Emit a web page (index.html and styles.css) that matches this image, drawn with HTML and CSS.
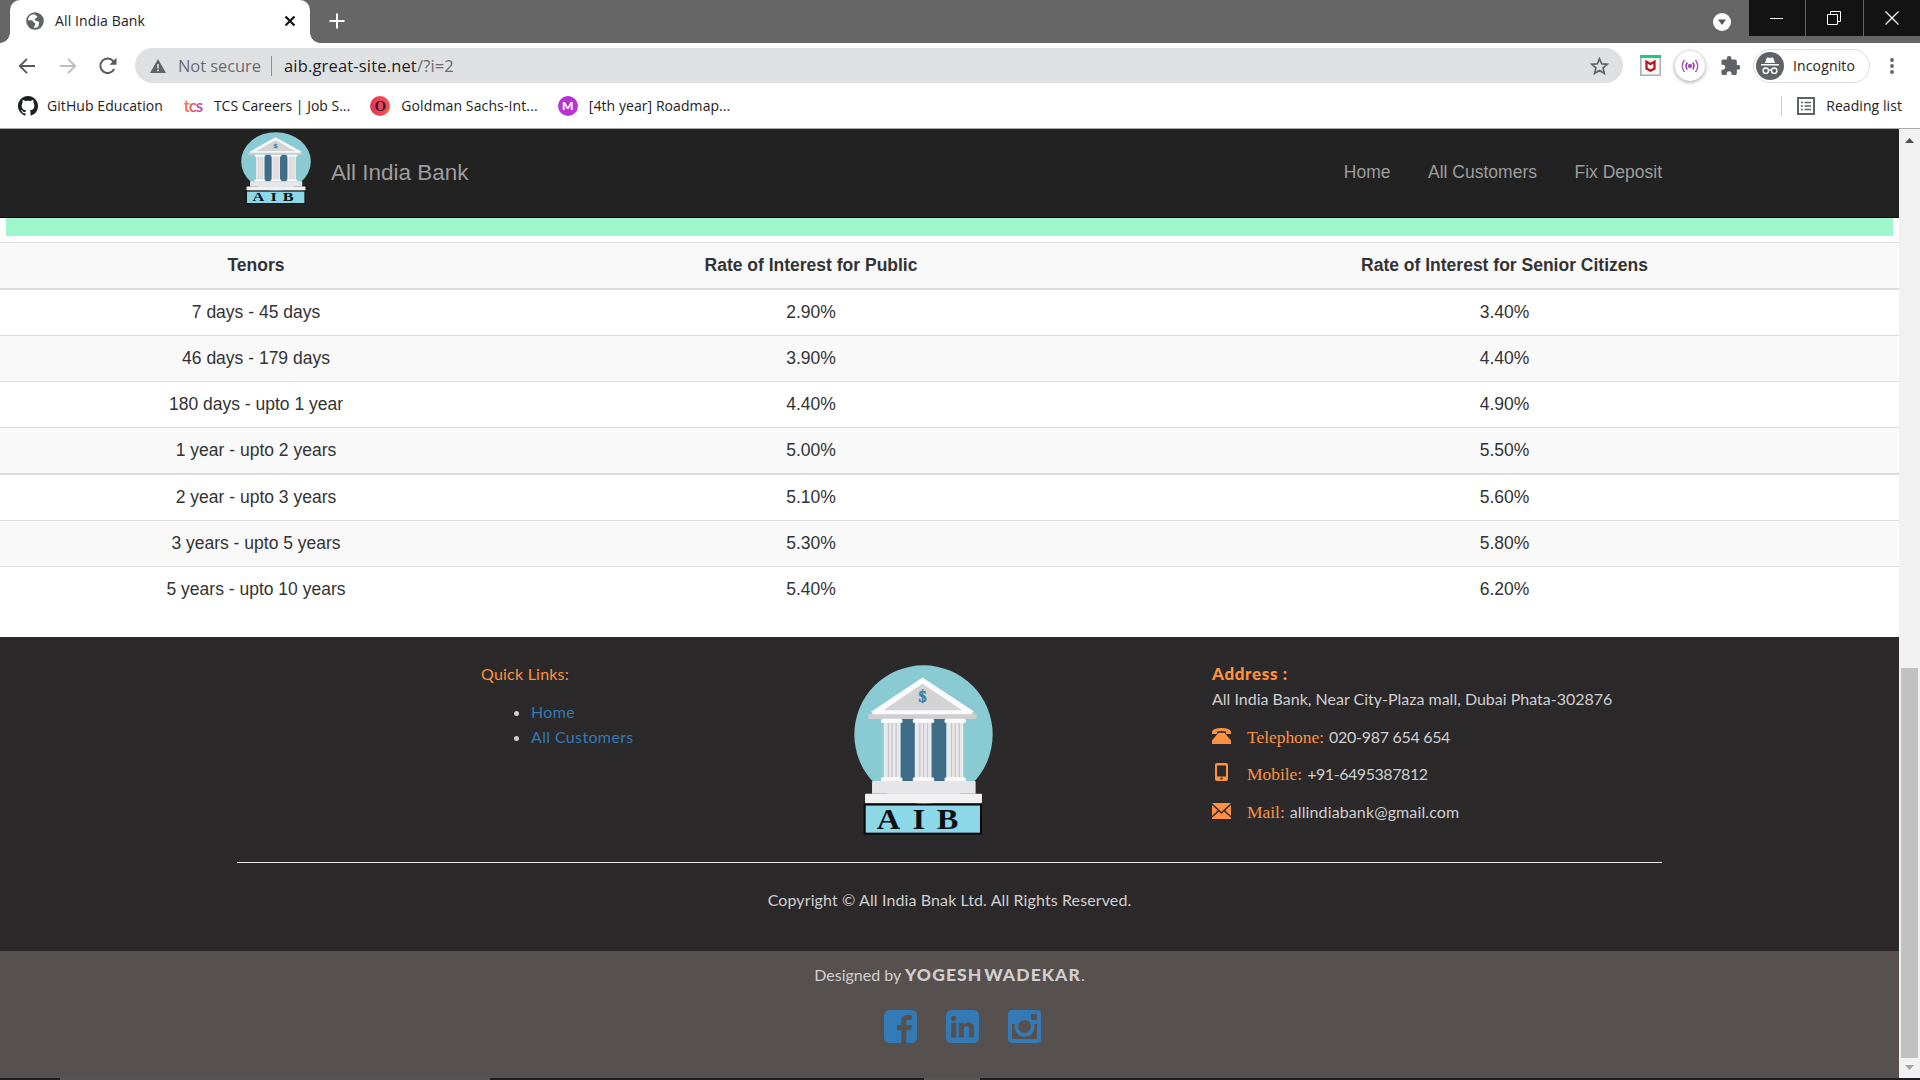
FILE: index.html
```html
<!DOCTYPE html>
<html lang="en">
<head>
<meta charset="utf-8">
<title>All India Bank</title>
<link rel="stylesheet" href="styles.css">
</head>
<body>
<svg class="defs" width="0" height="0" aria-hidden="true">
  <symbol id="bank-logo" viewBox="44 46 416 508" preserveAspectRatio="none">
    <circle cx="252" cy="254" r="207" fill="#8acad2"/>
    <rect x="183" y="205" width="96" height="192" fill="#3f6c87"/>
    <rect x="250" y="205" width="70" height="192" fill="#3f6c87"/>
    <rect x="86" y="192" width="326" height="15" rx="6" fill="#cfcfd1"/>
    <path d="M249 83 402 184q-2 8-8 9H104q-8-2-8-8z" fill="#fbfbfb"/>
    <path d="M249 102 368 181H132z" fill="#d3d3d5"/>
    <text x="249" y="158" text-anchor="middle" font-family="Liberation Serif, serif" font-weight="bold" font-size="48" fill="#2f83ac" stroke="#2f83ac" stroke-width="1.5">$</text>
    <g id="columns">
      <path d="M133 212h50v175h-50zM226 212h50v175h-50zM321 212h50v175h-50z" fill="#e9e9eb"/>
      <path d="M147 218v164M158 218v164M170 218v164M241 218v164M252 218v164M264 218v164M336 218v164M347 218v164M359 218v164" stroke="#c6c6ca" stroke-width="4"/>
      <path d="M131 213h52M226 213h52M321 213h52M131 388h52M226 388h52M321 388h52" stroke="#fafafa" stroke-width="13" stroke-linecap="round"/>
    </g>
    <path d="M98 396q0-3 4-3h302q4 0 4 3v35H98z" fill="#e6e6e8"/>
    <rect x="77" y="431" width="350" height="28" rx="3" fill="#f1f1f1"/>
    <rect x="76" y="463" width="348" height="87" fill="#8cd8e9" stroke="#080808" stroke-width="6"/>
    <text transform="scale(1.13 1)" x="99 193.800 258.400" y="535" font-family="Liberation Serif, serif" font-weight="bold" font-size="86" fill="#0a1014">AIB</text>
  </symbol>
</svg>

<header class="browser">
  <div class="tabstrip">
    <div class="tab">
      <svg class="globe" width="18" height="18" viewBox="0 0 18 18"><circle cx="9" cy="9" r="8.8" fill="#5f6368"/><path d="M8 2.2C5 2 2 5 2 8.200l3.500 0c1.500 0 1.500 2 3 2.500 1.500.3.500 3-.8 4.700 1 .6 3.300.3 4.800-1-.3-1.600.8-2.700.6-4-.5-1.800-4-.8-4.500-2.800 0-1.700 2.600-1 2.600-2.800 0-1-1.500-1.500-3.200-2.600z" fill="#fff"/></svg>
      <span class="tab-title">All India Bank</span>
      <svg class="tab-close" width="12" height="12" viewBox="0 0 12 12"><path d="M1.500 1.500l9 9M10.500 1.500l-9 9" stroke="#111" stroke-width="2.200"/></svg>
    </div>
    <svg class="new-tab" width="16" height="16" viewBox="0 0 16 16"><path d="M8 .5v15M.5 8h15" stroke="#fff" stroke-width="2"/></svg>
    <svg class="tab-search" width="18" height="18" viewBox="0 0 18 18"><circle cx="9" cy="9" r="9" fill="#fff"/><path d="M5 6.500h8L9 12z" fill="#555"/></svg>
    <div class="window-buttons">
      <span><svg width="14" height="14" viewBox="0 0 14 14"><path d="M0 7.500h13" stroke="#fff"/></svg></span>
      <span><svg width="14" height="14" viewBox="0 0 14 14" fill="none" stroke="#fff"><path d="M.5 3.500h10v10H.5zM3.500 3.500v-3h10v10h-3"/></svg></span>
      <span><svg width="14" height="14" viewBox="0 0 14 14"><path d="M.5.5l13 13M13.500.5l-13 13" stroke="#fff" stroke-width="1.200"/></svg></span>
    </div>
  </div>

  <div class="toolbar">
    <svg class="back" width="18" height="18" viewBox="0 0 18 18"><path d="M17 9H2M9 1.800 1.800 9 9 16.200" fill="none" stroke="#55585c" stroke-width="1.900"/></svg>
    <svg class="forward" width="18" height="18" viewBox="0 0 18 18"><path d="M1 9h15M9 1.800 16.200 9 9 16.200" fill="none" stroke="#bcbdbf" stroke-width="1.900"/></svg>
    <svg class="reload" width="18" height="18" viewBox="0 0 18 18"><path d="M15.200 12A7.300 7.300 0 1 1 14.500 4.300" fill="none" stroke="#55585c" stroke-width="2"/><path d="M17.500.8v7h-7z" fill="#55585c"/></svg>
    <div class="omnibox">
      <svg width="16" height="14" viewBox="0 0 16 14"><path d="M8 0l8 14H0z" fill="#5f6368"/><path d="M8 5v4.500M8 10.500v1.700" stroke="#dfe0e2" stroke-width="1.600"/></svg>
      <span class="security">Not secure</span>
      <span class="url">aib.great-site.net<i>/?i=2</i></span>
      <svg class="star" width="19" height="18" viewBox="0 0 19 18"><path d="M9.500 1.800l2.200 5 5.500.5-4.100 3.600 1.200 5.400-4.800-2.900-4.800 2.900 1.200-5.400L1.800 7.300l5.500-.5z" fill="none" stroke="#5f6368" stroke-width="1.700"/></svg>
    </div>
    <svg class="mcafee" width="21" height="21" viewBox="0 0 21 21"><rect x=".8" y=".8" width="19.400" height="19.400" fill="#f8f8f8" stroke="#a9adb3" stroke-width="1.500"/><path d="M0 0h21v3H0z" fill="#1ccb77"/><path d="M6.500 6.700v6.800l4 2.200 4-2.200V6.700l-4 2.300z" fill="none" stroke="#b5191f" stroke-width="2.300"/></svg>
    <span class="cast"><svg width="18" height="14" viewBox="0 0 18 14" fill="none" stroke="#a45bc0" stroke-width="1.400"><circle cx="9" cy="7" r="1.500" fill="#8e24aa"/><path d="M6.300 3.500q-2.600 3.500 0 7M11.700 3.500q2.600 3.500 0 7" stroke="#8e24aa"/><path d="M3.500 1q-4.500 6 0 12M14.500 1q4.500 6 0 12"/></svg></span>
    <svg class="puzzle" width="19" height="19" viewBox="1.500 1 21 21"><path d="M20.500 11H19V7c0-1.100-.9-2-2-2h-4V3.500a2.500 2.500 0 0 0-5 0V5H4c-1.100 0-2 .9-2 2v3.800h1.500a2.700 2.700 0 0 1 0 5.400H2V20c0 1.100.9 2 2 2h3.800v-1.500a2.700 2.700 0 0 1 5.400 0V22H17c1.100 0 2-.9 2-2v-4h1.500a2.500 2.500 0 0 0 0-5z" fill="#5f6368"/></svg>
    <div class="profile">
      <svg width="28" height="28" viewBox="0 0 28 28"><circle cx="14" cy="14" r="14" fill="#5f6368"/><path d="M9 11l1.700-5q.3-.8 1.300-.5l2 .5 2-.5q1-.3 1.300.5l1.700 5zM5 12h18v1.500H5z" fill="#fff"/><g fill="none" stroke="#fff" stroke-width="1.400"><circle cx="9.800" cy="18.700" r="2.700"/><circle cx="18.200" cy="18.700" r="2.700"/><path d="M12.500 18.300q1.500-.8 3 0"/></g></svg>
      <span>Incognito</span>
    </div>
    <svg class="menu" width="4" height="16" viewBox="0 0 4 16" fill="#5f6368"><circle cx="2" cy="2" r="1.900"/><circle cx="2" cy="8" r="1.900"/><circle cx="2" cy="14" r="1.900"/></svg>
  </div>

  <div class="bookmarks">
    <a class="bookmark"><svg width="20" height="20" viewBox="0 0 16 16"><path fill="#1b1f23" d="M8 0C3.580 0 0 3.580 0 8c0 3.540 2.290 6.530 5.470 7.590.4.070.55-.17.55-.38 0-.19-.01-.82-.01-1.490-2.010.37-2.530-.49-2.690-.94-.09-.23-.48-.94-.82-1.130-.28-.15-.68-.52-.01-.53.63-.01 1.080.58 1.230.82.72 1.210 1.870.87 2.330.66.070-.52.28-.87.51-1.070-1.780-.2-3.640-.89-3.640-3.950 0-.87.31-1.590.82-2.150-.08-.2-.36-1.020.08-2.120 0 0 .67-.21 2.200.82.64-.18 1.320-.27 2-.27s1.360.09 2 .27c1.530-1.040 2.200-.82 2.200-.82.44 1.100.16 1.920.08 2.120.51.56.82 1.270.82 2.150 0 3.070-1.870 3.750-3.650 3.950.29.25.54.73.54 1.480 0 1.070-.01 1.930-.01 2.200 0 .21.15.46.55.38A8.010 8.010 0 0 0 16 8c0-4.420-3.580-8-8-8z"/></svg><span>GitHub Education</span></a>
    <a class="bookmark tcs"><b>tcs</b><span>TCS Careers | Job S...</span></a>
    <a class="bookmark goldman"><b>O</b><span>Goldman Sachs-Int...</span></a>
    <a class="bookmark roadmap"><b>M</b><span>[4th year] Roadmap...</span></a>
    <div class="reading"><svg width="18" height="18" viewBox="0 0 18 18"><path d="M1 1h16v16H1z" fill="none" stroke="#5f6368" stroke-width="2"/><path d="M4 5.500h2M4 9h2M4 12.500h2M7.500 5.500H14M7.500 9H14M7.500 12.500H14" stroke="#5f6368" stroke-width="1.500"/></svg><span>Reading list</span></div>
  </div>
</header>

<div class="viewport">
  <main class="page">
    <nav class="navbar">
      <a class="brand"><svg width="70" height="72"><use href="#bank-logo"/></svg><span>All India Bank</span></a>
      <div class="nav-links"><a>Home</a><a>All Customers</a><a>Fix Deposit</a></div>
    </nav>
    <div class="banner"></div>
    <table class="rates">
      <colgroup><col class="tenor"><col class="public"><col class="senior"></colgroup>
      <thead><tr><th>Tenors</th><th>Rate of Interest for Public</th><th>Rate of Interest for Senior Citizens</th></tr></thead>
      <tbody>
        <tr><td>7 days - 45 days</td><td>2.90%</td><td>3.40%</td></tr>
        <tr><td>46 days - 179 days</td><td>3.90%</td><td>4.40%</td></tr>
        <tr><td>180 days - upto 1 year</td><td>4.40%</td><td>4.90%</td></tr>
        <tr><td>1 year - upto 2 years</td><td>5.00%</td><td>5.50%</td></tr>
        <tr class="thick"><td>2 year - upto 3 years</td><td>5.10%</td><td>5.60%</td></tr>
        <tr><td>3 years - upto 5 years</td><td>5.30%</td><td>5.80%</td></tr>
        <tr><td>5 years - upto 10 years</td><td>5.40%</td><td>6.20%</td></tr>
      </tbody>
    </table>

    <footer class="footer">
      <div class="footer-main">
        <div class="footer-columns">
          <section class="links">
            <h4>Quick Links:</h4>
            <ul><li><a>Home</a></li><li><a>All Customers</a></li></ul>
          </section>
          <svg class="footer-logo" width="139" height="170"><use href="#bank-logo"/></svg>
          <section class="address">
            <h4>Address :</h4>
            <p>All India Bank, Near City-Plaza mall, Dubai Phata-302876</p>
            <div class="contact"><svg width="19" height="16" viewBox="0 0 19 16"><path d="M0 6V3.500Q1 0 9.500 0T19 3.500V6h-5V3.500Q9.500 2.300 5 3.500V6zM6.500 4.800h6L19 12.500V16H0v-3.500z" fill="#ff9142"/></svg><em>Telephone:</em><span class="digits">020-987 654 654</span></div>
            <div class="contact mobile"><svg width="19" height="18" viewBox="0 0 19 18"><path fill-rule="evenodd" d="M5 0h9q2 0 2 2v14q0 2-2 2H5q-2 0-2-2V2q0-2 2-2zM5 2.500v11h9v-11zM8.500 14.500v2h2v-2z" fill="#ff9142"/></svg><em>Mobile:</em><span class="digits tight">+91-6495387812</span></div>
            <div class="contact"><svg width="19" height="16" viewBox="0 0 19 16"><path d="M0 0h19L9.500 9zM0 2l5.800 5.500L0 13zM19 2l-5.800 5.500L19 13zM0 16v-1.200l7-6.200 2.500 2.400L12 8.600l7 6.200V16z" fill="#ff9142"/></svg><em>Mail:</em><span>allindiabank@gmail.com</span></div>
          </section>
        </div>
        <p class="copyright">Copyright © All India Bnak Ltd. All Rights Reserved.</p>
      </div>
      <div class="footer-credit">
        <p>Designed by <strong>YOGESH WADEKAR</strong>.</p>
        <div class="social">
          <svg width="33" height="33" viewBox="0 0 33 33"><path d="M6 0h21q6 0 6 6v21q0 6-6 6h-4.700V20.200H27l.7-5h-5.400v-3q0-2.400 2.500-2.400h3V5.300q-2-.3-4-.3-6.500 0-6.500 6.500v3.700H13v5h4.300V33H6q-6 0-6-6V6q0-6 6-6z" fill="#337ab7"/></svg>
          <svg width="33" height="33" viewBox="0 0 33 33"><path fill-rule="evenodd" d="M6 0h21q6 0 6 6v21q0 6-6 6H6q-6 0-6-6V6q0-6 6-6zM5.200 12.800v14.800h5V12.800zM7.700 5.700a2.600 2.600 0 1 0 0 5.200 2.600 2.600 0 1 0 0-5.200zM12.800 12.800v14.800h5v-8.300q0-3 2.700-3t2.600 3.200v8.100h5v-8.700q0-6.600-5.700-6.600-3.100 0-4.600 2.500v-2z" fill="#337ab7"/></svg>
          <svg width="33" height="33" viewBox="0 0 33 33"><path fill-rule="evenodd" d="M4 0h25q4 0 4 4v25q0 4-4 4H4q-4 0-4-4V4q0-4 4-4zM24 4q-1 0-1 1v4q0 1 1 1h4q1 0 1-1V5q0-1-1-1zM4 14v14q0 1 1 1h23q1 0 1-1V14h-3q.7 2 .4 4.500Q25 26.500 16.500 26.700 8 26.500 6.700 18.500 6.400 16 7 14zM16.500 10a6.500 6.500 0 1 0 0 13 6.500 6.500 0 1 0 0-13z" fill="#337ab7"/></svg>
        </div>
      </div>
    </footer>
  </main>
  <aside class="scrollbar">
    <svg width="9" height="5" viewBox="0 0 9 5"><path d="M0 5l4.500-5L9 5z" fill="#505050"/></svg>
    <div class="thumb"></div>
    <svg width="9" height="5" viewBox="0 0 9 5"><path d="M0 0l4.500 5L9 0z" fill="#a3a3a3"/></svg>
  </aside>
</div>
<div class="taskbar"><span class="task-a"></span><span class="task-b"></span></div>
</body>
</html>
```
FILE: styles.css
```css
* { box-sizing: border-box; }
body {
  margin: 0;
  width: 1920px;
  height: 1080px;
  overflow: hidden;
  background: #fff;
  color: #333;
  font: 17.5px/25px "Liberation Sans", Arial, sans-serif;
}
svg { display: block; flex: none; }
.defs { display: none; }
p, h4, ul { margin: 0; }

/* Browser window */
.browser {
  height: 129px;
  border-bottom: 1px solid #a9a9a9;
  font: 14px/20px "Open Sans", "Segoe UI", sans-serif;
  color: #222;
  white-space: nowrap;
}
.tabstrip { display: flex; height: 43px; background: #666; }
.tab {
  position: relative;
  display: flex;
  align-items: center;
  width: 300px;
  height: 43px;
  margin-left: 10px;
  padding: 0 14px 1px 16px;
  border-radius: 10px 10px 0 0;
  background: #fff;
}
.tab::before, .tab::after {
  content: "";
  position: absolute;
  bottom: 0;
  width: 10px;
  height: 10px;
}
.tab::before { left: -10px; background: radial-gradient(circle at 0 0, #666 9.500px, #fff 10px); }
.tab::after { right: -10px; background: radial-gradient(circle at 100% 0, #666 9.500px, #fff 10px); }
.tab-title { margin-left: 11px; letter-spacing: .12px; }
.tab-close { margin-left: auto; }
.new-tab { margin: 13px 0 0 19px; }
.tab-search { margin: 13px 18px 0 auto; }
.window-buttons { display: grid; grid-template-columns: 56px 57px 56px; gap: 1px; height: 36px; background: #666; }
.window-buttons span { display: grid; place-items: center; padding-right: 1px; background: #131313; }

.toolbar { display: flex; align-items: center; height: 45px; padding: 0 26px 0 18px; }
.forward { margin-left: 23px; }
.reload { margin-left: 22px; }
.omnibox {
  display: flex;
  align-items: center;
  width: 1488px;
  height: 35px;
  margin-left: 18px;
  padding: 0 14px 0 15px;
  border-radius: 18px;
  background: #dfe0e2;
  font-size: 16.5px;
}
.security {
  margin-left: 12px;
  padding-right: 10px;
  border-right: 1px solid #8a8c90;
  color: #6a6c70;
  letter-spacing: -.07px;
}
.url { margin-left: 12px; letter-spacing: .17px; }
.url i { font-style: normal; color: #6a6c70; }
.star { margin-left: auto; }
.mcafee { margin-left: 17px; }
.cast {
  display: grid;
  place-items: center;
  width: 30px;
  height: 30px;
  margin-left: 14px;
  border-radius: 50%;
  background: #fff;
  box-shadow: 0 1px 4px rgba(0, 0, 0, .4);
}
.puzzle { margin-left: 16px; }
.profile {
  display: flex;
  align-items: center;
  width: 117px;
  height: 34px;
  margin-left: 13px;
  padding-left: 2px;
  border: 1px solid #dcdde0;
  border-radius: 17px;
}
.profile span { margin-left: 9px; letter-spacing: .14px; }
.menu { margin-left: auto; }

.bookmarks { display: flex; align-items: center; height: 36px; padding: 0 18px; letter-spacing: .07px; }
.bookmark { display: flex; align-items: center; gap: 9px; margin-right: 20px; }
.bookmark b { display: block; width: 20px; height: 20px; border-radius: 50%; text-align: center; letter-spacing: 0; }
.tcs { gap: 11px; letter-spacing: 0; }
.tcs b {
  border-radius: 0;
  background: linear-gradient(100deg, #f39a3a, #e4546e 50%, #9950c0);
  background-clip: text;
  color: transparent;
  font: bold 17px/19px Lato, sans-serif;
  letter-spacing: -1px;
}
.goldman { gap: 11px; letter-spacing: .12px; }
.goldman b { background: linear-gradient(90deg, #e8305a, #f05a4c); color: #3b1640; font: bold 15px/20px "Liberation Serif", serif; }
.roadmap { gap: 11px; }
.roadmap b { background: #b833d2; color: #fff; font: 900 12px/20px Lato, sans-serif; }
.reading {
  display: flex;
  align-items: center;
  gap: 11px;
  height: 20px;
  margin-left: auto;
  padding-left: 15px;
  border-left: 1px solid #ccc;
}

/* Site */
.viewport { display: grid; grid-template-columns: 1899px 21px; height: 949px; }
.page { height: 949px; overflow: hidden; }
.navbar {
  display: flex;
  justify-content: space-between;
  align-items: flex-start;
  height: 89px;
  padding: 0 237px 0 241px;
  border-bottom: 1px solid #080808;
  background: #222;
  color: #9d9d9d;
}
.brand { display: flex; padding-top: 3px; font-size: 22.5px; }
.brand span { margin: 28px 0 0 20px; }
.nav-links { display: flex; gap: 37.500px; padding-top: 31px; }
.banner { height: 18px; margin: 0 6px 6px; background: #9ff6cd; }

.rates { width: 100%; border-collapse: separate; border-spacing: 0; table-layout: fixed; text-align: center; }
.tenor { width: 512px; }
.public { width: 598px; }
.senior { width: 789px; }
.rates th, .rates td { padding: 0; border-top: 1px solid #ddd; }
.rates th { height: 48px; border-bottom: 2px solid #ddd; background: #f9f9f9; }
.rates td { height: 46px; }
.rates tbody tr:first-child td { height: 45px; border-top: 0; }
.rates tbody tr:nth-child(even) { background: #f9f9f9; }
.rates .thick td { height: 47px; border-top-width: 2px; }

.footer {
  margin-top: 25px;
  font: 16px/25px Lato, "Gill Sans MT", sans-serif;
  color: #d0cfcf;
}
.footer-main { height: 314px; padding: 0 237px; background: #2b292a; }
.footer-columns {
  display: grid;
  grid-template-columns: 373px 358px 1fr;
  height: 226px;
  padding: 24px 0 0 244px;
  border-bottom: 1px solid #e8e8e8;
}
.footer h4 { font-size: 16px; color: #ff9142; }
.links h4 { font-weight: 400; letter-spacing: .22px; }
.links ul { margin-top: 13px; padding-left: 50px; letter-spacing: .36px; }
.links a { color: #337ab7; }
.footer-logo { margin-top: 4px; }
.address h4 { font-weight: 900; font-size: 17px; letter-spacing: .65px; }
.address p { white-space: nowrap; }
.contact { display: flex; height: 25px; margin-top: 12.500px; }
.contact svg { margin-top: 4px; }
.mobile svg { margin-top: 2px; }
.contact em {
  margin: 1px 5px 0 16px;
  color: #ff9142;
  font: 17.5px/25px "Liberation Serif", Garamond, serif;
  letter-spacing: -.04px;
}
.contact span { letter-spacing: .12px; }
.contact .digits { letter-spacing: -.3px; }
.contact .tight { letter-spacing: -.44px; }
.copyright { padding-top: 24px; text-align: center; letter-spacing: .11px; }
.footer-credit { height: 127px; padding-top: 11px; background: #56514f; text-align: center; }
.footer-credit strong { font-size: 17.5px; font-weight: 900; letter-spacing: 1.1px; word-spacing: -3.5px; }
.social { display: flex; justify-content: center; gap: 29px; padding: 23px 0 0 25px; }

.scrollbar {
  display: flex;
  flex-direction: column;
  align-items: center;
  padding: 9px 1px 8px 0;
  background: #f1f1f1;
}
.thumb { width: 17px; height: 390px; margin: auto 0 7px; background: #c1c1c1; }

.taskbar { display: flex; height: 2px; background: #211c20; }
.task-a { width: 430px; margin-left: 60px; background: #575356; }
.task-b { width: 56px; margin-left: 434px; background: #5a5658; }
```
